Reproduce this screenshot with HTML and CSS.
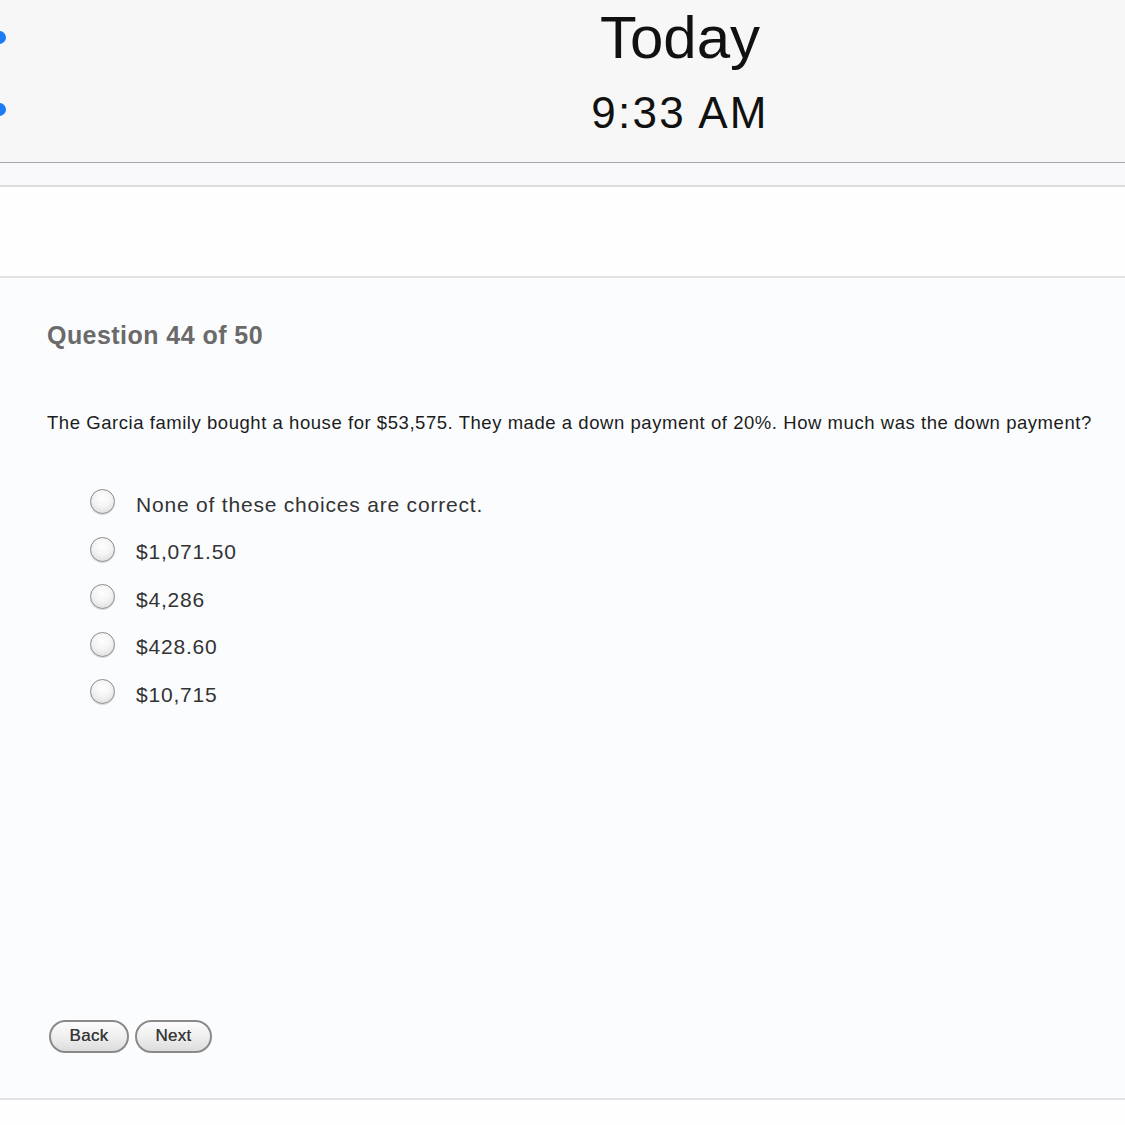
FILE: index.html
```html
<!DOCTYPE html>
<html>
<head>
<meta charset="utf-8">
<link rel="stylesheet" href="styles.css">
</head>
<body>
<header class="topbar">
  <span class="dot dot-one"></span>
  <span class="dot dot-two"></span>
  <div class="title">Today</div>
  <div class="time">9:33 AM</div>
</header>
<div class="strip"></div>
<div class="blank"></div>
<main class="quiz">
  <h1 class="qnum">Question 44 of 50</h1>
  <p class="qtext">The Garcia family bought a house for $53,575. They made a down payment of 20%. How much was the down payment?</p>
  <ul class="options">
    <li class="option"><span class="radio"></span><span class="label">None of these choices are correct.</span></li>
    <li class="option"><span class="radio"></span><span class="label">$1,071.50</span></li>
    <li class="option"><span class="radio"></span><span class="label">$4,286</span></li>
    <li class="option"><span class="radio"></span><span class="label">$428.60</span></li>
    <li class="option"><span class="radio"></span><span class="label">$10,715</span></li>
  </ul>
  <div class="buttons">
    <button class="btn btn-back">Back</button>
    <button class="btn btn-next">Next</button>
  </div>
</main>
<div class="footer"></div>
</body>
</html>
```

FILE: styles.css
```css
* { box-sizing: border-box; }
html, body { margin: 0; padding: 0; }
body {
  width: 1125px;
  height: 1125px;
  overflow: hidden;
  background: #fefefe;
  font-family: "Liberation Sans", Arial, sans-serif;
}
.topbar {
  position: relative;
  height: 163px;
  background: #f7f7f7;
  border-bottom: 1px solid #a9a9a9;
  display: flex;
  flex-direction: column;
  align-items: center;
  padding-left: 235px;
  color: #111;
}
.dot {
  position: absolute;
  left: -7px;
  width: 13px;
  height: 13px;
  border-radius: 50%;
  background: #1a7df4;
}
.dot-one { top: 31px; }
.dot-two { top: 103px; }
.title {
  font-size: 60px;
  line-height: 60px;
  margin-top: 8px;
  letter-spacing: 0;
}
.time {
  font-size: 44px;
  line-height: 44px;
  margin-top: 23px;
  letter-spacing: 2.3px;
}
.strip {
  height: 24px;
  background: #f9f8fa;
  border-bottom: 2px solid #dedbde;
}
.blank {
  height: 91px;
  background: #fefefe;
  border-bottom: 2px solid #e7e3e5;
}
.quiz {
  height: 822px;
  background: #fbfcfe;
  border-bottom: 2px solid #e3e3e7;
  padding: 42px 0 0 47px;
}
.qnum {
  margin: 0;
  font-size: 25px;
  line-height: 30px;
  font-weight: bold;
  color: #6a6a6a;
  letter-spacing: 0.45px;
}
.qtext {
  margin: 62px 0 0 0;
  font-size: 18.5px;
  line-height: 22px;
  color: #1c1c1c;
  letter-spacing: 0.55px;
  white-space: nowrap;
}
.options {
  list-style: none;
  margin: 44px 0 0 0;
  padding: 0 0 0 43px;
}
.option {
  display: flex;
  align-items: center;
  height: 47.5px;
}
.radio {
  width: 25px;
  height: 25px;
  border-radius: 50%;
  border: 1.5px solid #8c8c8c;
  background: radial-gradient(circle at 50% 35%, #ffffff 0%, #f4f4f4 45%, #d6d6d6 100%);
  box-shadow: 0 1px 1px rgba(0,0,0,0.15);
  flex-shrink: 0;
}
.label {
  margin-left: 21px;
  padding-top: 6px;
  font-size: 21px;
  color: #333;
  letter-spacing: 0.8px;
}
.buttons {
  display: flex;
  gap: 6px;
  margin-top: 304px;
  margin-left: 2px;
}
.btn {
  height: 33px;
  border-radius: 17px;
  border: 2px solid #8a8a8a;
  background: linear-gradient(#fdfdfd, #ececec 60%, #dcdcdc);
  font-family: "Liberation Sans", Arial, sans-serif;
  font-size: 17px;
  color: #3a3a3a;
  padding: 0;
  letter-spacing: 0.3px;
  text-shadow: 0 0 0.4px #3a3a3a;
}
.btn-back { width: 80px; }
.btn-next { width: 77px; }
.footer {
  height: 26px;
  background: #fefefe;
}
```
